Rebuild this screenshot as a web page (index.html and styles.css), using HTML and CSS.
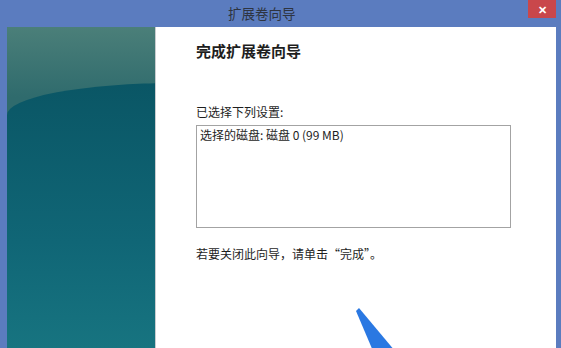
FILE: index.html
```html
<!DOCTYPE html>
<html lang="zh-CN">
<head>
<meta charset="UTF-8">
<title>扩展卷向导</title>
<link rel="stylesheet" href="styles.css">
</head>
<body>
<div class="window">
    <div class="titlebar">
        <span class="title">扩展卷向导</span>
        <span class="close">&#x2715;</span>
    </div>
    <div class="frame">
        <div class="side"></div>
        <div class="content">
            <h1>完成扩展卷向导</h1>
            <p class="label">已选择下列设置:</p>
            <div class="listbox">选择的磁盘: 磁盘 0 (99 MB)</div>
            <p class="hint">若要关闭此向导，请单击“完成”。</p>
            <svg class="arrow" width="60" height="50" viewBox="0 0 60 50">
                <polygon points="14,13 17,10 53,53 31,53" fill="#2a78e2"/>
            </svg>
        </div>
    </div>
</div>
</body>
</html>
```

FILE: styles.css
```css
body {
    margin: 0;
    font-family: "Noto Sans CJK SC", "Liberation Sans", sans-serif;
    color: #1e1e1e;
}

.window {
    width: 561px;
    height: 348px;
    background-color: #5b7cbf;
    overflow: hidden;
    display: flex;
    flex-direction: column;
}

.titlebar {
    height: 27px;
    flex-shrink: 0;
    display: flex;
    align-items: flex-start;
    position: relative;
}

.title {
    margin-left: 228px;
    margin-top: 4px;
    font-size: 13.5px;
    line-height: 18px;
    color: #2e3440;
}

.close {
    position: absolute;
    top: 0;
    left: 528px;
    width: 28px;
    height: 18px;
    background-color: #c9474b;
    color: #fff;
    font-size: 11px;
    font-weight: bold;
    line-height: 18px;
    text-align: center;
}

.frame {
    flex: 1;
    display: flex;
    margin: 0 5px 0 7px;
}

.side {
    width: 148px;
    position: relative;
    overflow: hidden;
    background: linear-gradient(#4b7f79, #2f6b6d 70px);
}

.side::after {
    content: "";
    position: absolute;
    top: 56px;
    left: 0;
    right: -40px;
    bottom: 0;
    border-top-left-radius: 170px 32px;
    background: linear-gradient(#0a5665, #106676 60%, #177480);
}

.content {
    flex: 1;
    position: relative;
    background-color: #fff;
    border-left: 1px solid #c9cdd0;
    padding: 14px 0 0 40px;
}

h1 {
    margin: 0;
    font-size: 15px;
    line-height: 20px;
    font-weight: bold;
}

.label {
    margin: 43px 0 0;
    font-size: 12px;
    line-height: 16px;
}

.listbox {
    margin-top: 5px;
    border: 1px solid #a3a3a3;
    padding: 1px 3px;
    box-sizing: border-box;
    width: 315px;
    height: 103px;
    font-size: 12px;
    line-height: 16px;
}

.hint {
    margin: 18px 0 0;
    font-size: 12px;
    line-height: 16px;
}

.arrow {
    position: absolute;
    left: 186px;
    top: 271px;
}
```
